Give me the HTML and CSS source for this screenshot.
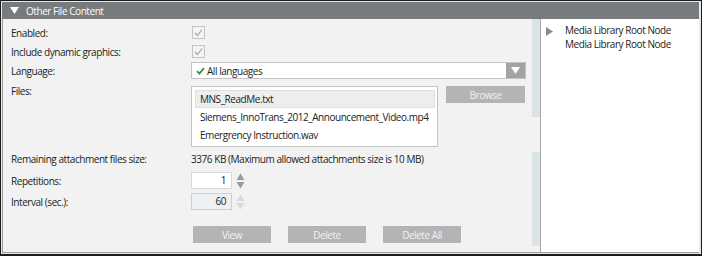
FILE: index.html
```html
<!DOCTYPE html>
<html>
<head>
<meta charset="utf-8">
<link rel="stylesheet" href="styles.css">
</head>
<body>
<div class="frame">
  <div class="inner">
    <div class="header">
      <svg class="hdr-tri" width="9" height="7" viewBox="0 0 9 7"><path d="M0 0 H9 L4.5 7 Z" fill="#fff"/></svg>
      <span>Other File Content</span>
    </div>
    <div class="body">
      <div class="left">
        <div class="form">
          <div class="row r19">
            <div class="label">Enabled:</div>
            <div class="ctl"><span class="check"><svg width="11" height="11" viewBox="0 0 11 11"><path d="M2 6 L4.5 8.5 L9 2.5" fill="none" stroke="#a8a8a8" stroke-width="1.2"/></svg></span></div>
          </div>
          <div class="row r19">
            <div class="label">Include dynamic graphics:</div>
            <div class="ctl"><span class="check"><svg width="11" height="11" viewBox="0 0 11 11"><path d="M2 6 L4.5 8.5 L9 2.5" fill="none" stroke="#a8a8a8" stroke-width="1.2"/></svg></span></div>
          </div>
          <div class="row r19">
            <div class="label">Language:</div>
            <div class="ctl">
              <div class="select">
                <span class="sel-text"><svg class="gcheck" width="9" height="8" viewBox="0 0 9 8"><path d="M1 4.2 L3.4 6.6 L8 1.2" fill="none" stroke="#2e9a3e" stroke-width="1.8"/></svg>All languages</span>
                <span class="sel-btn"><svg width="9" height="7" viewBox="0 0 9 7"><path d="M0 0 H9 L4.5 7 Z" fill="#fff"/></svg></span>
              </div>
            </div>
          </div>
          <div class="row files">
            <div class="label lbl-top">Files:</div>
            <div class="ctl files-ctl">
              <div class="listbox">
                <div class="item sel">MNS_ReadMe.txt</div>
                <div class="item">Siemens_InnoTrans_2012_Announcement_Video.mp4</div>
                <div class="item">Emergrency Instruction.wav</div>
              </div>
              <div class="btn browse">Browse</div>
            </div>
          </div>
          <div class="row r19">
            <div class="label">Remaining attachment files size:</div>
            <div class="ctl value">3376 KB (Maximum allowed attachments size is 10 MB)</div>
          </div>
          <div class="row r19 mt3">
            <div class="label">Repetitions:</div>
            <div class="ctl spin-ctl">
              <div class="num">1</div>
              <svg class="spin" width="9" height="16" viewBox="0 0 9 16"><path d="M4.5 0.5 L8.5 7 H0.5 Z M0.5 9 H8.5 L4.5 15.5 Z" fill="#9a9a9a"/></svg>
            </div>
          </div>
          <div class="row r19 mt2">
            <div class="label">Interval (sec.):</div>
            <div class="ctl spin-ctl">
              <div class="num dis">60</div>
              <svg class="spin" width="9" height="16" viewBox="0 0 9 16"><path d="M4.5 0.5 L8.5 7 H0.5 Z M0.5 9 H8.5 L4.5 15.5 Z" fill="#d3dbe0"/></svg>
            </div>
          </div>
          <div class="actions">
            <div class="btn act">View</div>
            <div class="btn act">Delete</div>
            <div class="btn act">Delete All</div>
          </div>
        </div>
      </div>
      <div class="scroll">
        <div class="track t1"></div>
        <div class="track gap"></div>
        <div class="track t2"></div>
      </div>
      <div class="right">
        <div class="tree">
          <svg class="tree-tri" width="7" height="9" viewBox="0 0 7 9"><path d="M0 0 L7 4.5 L0 9 Z" fill="#8a8a8a"/></svg>
          <div class="tree-text">
            <div>Media Library Root Node</div>
            <div>Media Library Root Node</div>
          </div>
        </div>
      </div>
    </div>
  </div>
</div>
</body>
</html>
```

FILE: styles.css
```css
* { box-sizing: border-box; }
html, body { margin: 0; padding: 0; background: #ffffff; }
body {
  font-family: "Open Sans", "Noto Sans", "Liberation Sans", sans-serif;
  font-size: 10px;
  letter-spacing: -0.45px;
  color: #222;
}
.frame {
  width: 702px;
  height: 256px;
  border: 1px solid #1c1c1c;
  border-bottom-width: 2px;
  background: #e8e8e8;
  padding: 1px;
}
.inner {
  height: 100%;
  display: flex;
  flex-direction: column;
  border-right: 1px solid #e8e8e8;
}
.header {
  height: 17px;
  background: #777b7d;
  color: #fff;
  display: flex;
  align-items: center;
  font-size: 10px;
  flex: none;
}
.hdr-tri { margin-left: 8px; margin-right: 7px; }
.body {
  flex: 1;
  display: flex;
  border-left: 1px solid #9a9a9a;
  border-bottom: 1px solid #9a9a9a;
}
.left {
  width: 528px;
  background: #f2f2f2;
  padding: 4px 0 0 8px;
  flex: none;
}
.row { display: flex; }
.r19 { height: 19px; align-items: center; }
.mt3 { margin-top: 3px; }
.mt2 { margin-top: 2px; }
.label { width: 180px; flex: none; }
.ctl { display: flex; align-items: center; }
.check {
  width: 13px; height: 13px;
  border: 1px solid #c4c4c4;
  background: #f4f4f4;
  margin-left: 1px;
  display: flex; align-items: center; justify-content: center;
}
.select {
  width: 335px; height: 17px;
  background: #fff;
  border: 1px solid #c3c3c3;
  display: flex;
  justify-content: space-between;
}
.sel-text { display: flex; align-items: center; padding-left: 4px; }
.gcheck { margin-right: 2px; }
.sel-btn {
  width: 19px; height: 15px;
  background: #a3a3a3;
  display: flex; align-items: center; justify-content: center;
}
.files { margin-top: 4px; height: 65px; }
.lbl-top { padding-top: 0px; }
.files-ctl { align-items: flex-start; padding-top: 2px; }
.listbox {
  width: 247px; height: 61px;
  background: #fff;
  border: 1px solid #c3c3c3;
  padding: 3px 2px 0 3px;
}
.item { height: 18px; line-height: 18px; padding-left: 5px; }
.item.sel { background: #eeeeee; border: 1px solid #dedede; line-height: 16px; padding-left: 4px; }
.btn {
  background: #b4b4b4;
  color: #f2f2f2;
  height: 17px;
  display: flex; align-items: center; justify-content: center;
}
.browse { width: 79px; margin-left: 8px; }
.value { padding-left: 0; }
.num {
  width: 41px; height: 17px;
  background: #fff;
  border: 1px solid #d8d8d8;
  text-align: right;
  padding-right: 5px;
  line-height: 15px;
}
.num.dis { background: #eef1f3; border-color: #c2d3e0; }
.spin { margin-left: 4px; }
.actions {
  display: flex;
  gap: 17px;
  margin-top: 15px;
  padding-left: 182px;
}
.act { width: 78px; }
.scroll {
  width: 10px;
  flex: none;
  display: flex;
  flex-direction: column;
  border-right: 1px solid #a8a8a8;
  background: #f2f2f2;
  padding-left: 1px;
}
.track { background: #dae3e6; }
.t1 { height: 98px; }
.gap { height: 35px; background: #f3f3f3; }
.t2 { flex: 1; margin-bottom: 6px; }
.right {
  flex: 1;
  background: #fff;
  padding: 5px 0 0 5px;
}
.tree { display: flex; align-items: flex-start; }
.tree-tri { margin-top: 3px; margin-right: 12px; }
.tree-text { line-height: 13.6px; }
```
